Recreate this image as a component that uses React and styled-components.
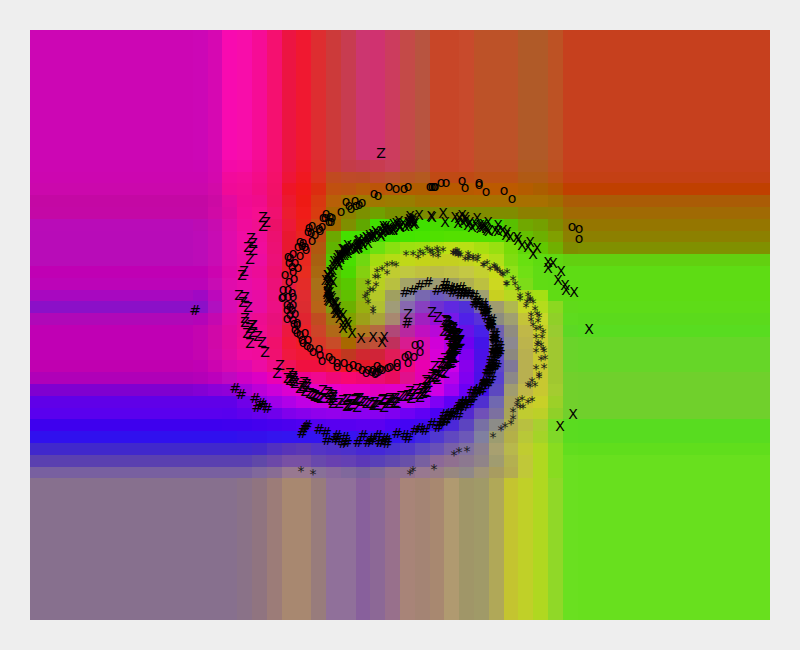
import styled, { createGlobalStyle } from "styled-components";

const GlobalStyle = createGlobalStyle`
  html, body {
    margin: 0;
    background: #eeeeee;
  }
`;

const Figure = styled.div`
  width: 800px;
  height: 650px;
  padding: 30px;
  box-sizing: border-box;
  background: #eeeeee;
`;

const Plot = styled.svg`
  display: block;
  width: 740px;
  height: 590px;
`;

const Marker = styled.text`
  font-family: "DejaVu Sans", sans-serif;
  font-size: 14px;
  text-anchor: middle;
  fill: ${(props) => (props.$soft ? "#1a1a1a" : "#000000")};
`;

const CELL_W = 14.8;
const CELL_H = 11.8;

// left colour (columns 0-10), then columns 11-36, then the colour of the right side
const BANDS = [
  [0, 11, "cc06b4 cc07b6 d608b2 f80ab0 f80daa f60c96 f51070 ec1442 f01830 de2d30 cc3a3a c83c50 cc3670 d03270 cc3c5e c44a48 b85440 c84628 c84628 c84a2c bd5228 bd5228 bd5228 b05a28 b05a28 bd5224 c6401e c6401e"],
  [11, 1, "cc06b2 cc06b4 d408b0 f40aa8 f60ca4 f40c90 f5106e ec1440 f01828 de2c28 c83c38 c43c48 c43c50 c83c50 c8405a c04a40 b85238 c84424 c84424 c84828 bd5024 bd5024 bd5024 b05a20 b05a20 bd5020 c6401a c6401a"],
  [12, 1, "cc06b0 cc06b0 d408ae f20a9c f40c98 f40c88 f4106a ee1438 f01820 dc3020 c04a20 be4a28 bc4a28 c04a30 bc5030 b85424 b45a20 c04a14 c04a14 c04a14 bc5014 bc5014 bc5014 b05a14 b05a14 bc5014 c44014 c44014"],
  [13, 1, "cb08ac cb08ac d20aa8 f00a98 f20c94 f20c84 f21068 ee1428 f01818 dc2c10 c05010 bc5210 b85a08 bc5408 b85a08 b45c00 b05e00 b85a00 b85a00 b85a00 bc5a00 bc5a00 bc5a00 b45c00 ac5e00 b45400 c04000 c04000"],
  [14, 1, "c408a4 c408a4 cc0aa4 e40aa0 f00a94 f00c8c f01068 ec1830 ee1a14 d83810 b86008 a87000 a07800 a07800 9c7c00 987e00 a07400 a87000 a87000 a87000 a87000 a87000 a87000 a87000 a87000 a06e00 aa5c06 aa5c06"],
  [15, 1, "c408a6 c408a6 d00aa6 e00aa0 f20a98 f50e90 f01070 ec1c30 f01c18 d83c10 a86800 8c8000 7c9000 70a000 789000 7c8c00 7c8c00 808c00 808c00 808c00 808c00 808c00 808c00 8c8000 8c8000 907e00 a06a04 a06a04"],
  [16, 1, "b90cb8 bc0cb4 c80cb0 e00ca8 f00c9c f01090 ec1068 ec1838 ec2018 c84c10 a06800 7f8f00 60a800 40e000 40e000 40e000 40e000 48dc00 44d800 40d800 40d800 44d400 58c000 70a800 74a000 808c00 907800 957600"],
  [17, 1, "b80cb8 bc0cb8 c80cb4 e00cac f00ca4 f00c98 ec1070 e81830 e82420 bc4c10 6ca800 44e000 44e000 40e400 40e400 44e400 48e400 50e000 54e000 54e000 54e000 54e000 60d000 64c000 6cb000 80a000 8c8000 8c8000"],
  [18, 1, "b80cb8 bc0cb8 c80cb4 e00cac f00ca4 f00c9c ec1074 e81830 e82820 b05810 60b400 44e000 48e000 6ce010 88e010 9ce010 a0e010 b0e010 bce014 b8e014 a8e010 98e010 78dc08 60d808 60c800 70b000 808c00 809000"],
  [19, 1, "b80cb8 bc0cb8 c80cb4 e00cac ec0ca4 ec0ca0 ec1078 e81c30 e82820 a86010 50c800 48e000 70d810 a4dc10 b4dc14 c0d818 c4d418 c4d020 c4d020 c4d420 c4dc18 b0e018 80dc10 68e010 5edc10 60d810 62d010 62d010"],
  [20, 1, "c000b4 c000b4 cc04b0 e008a8 e80ca0 ec0c98 ec1070 e81c30 e82c20 a86810 58c000 4cd800 84d010 b4d818 c0cc30 c0c840 c0c040 bcbc48 c0c048 c4c844 c4d030 c8dc18 90e018 70e014 60dc14 5edc14 5edc14 5edc14"],
  [21, 1, "bc04b8 bc04b8 c80cb4 e00cac e80ca8 ec0ca0 ec1078 e81c40 e42c28 a87018 60b800 58c800 8cc010 b8d020 b8c040 a4a468 a09c70 9c9c74 a0a060 b0b050 bcc040 ccd820 a4e018 7cdc18 60dc14 5edc14 5edc14 5edc14"],
  [22, 1, "a808c0 a008c4 bc08bc d80cb4 e40cac e80ca4 ec1080 e81c50 e02c30 b06818 70a810 60c000 90b810 b4c828 a0a060 8888a0 7868b0 6c58c0 7060b0 8080a0 a0a070 c8d020 b8d820 a8d818 a4e014 60dc14 5edc14 5edc14"],
  [23, 1, "8b10c8 8c10c8 b010c0 d80cb4 e80ca8 e80ca4 ec1084 e81c50 dc2c30 b86418 809810 6cb000 98b010 b0c030 a09c78 8868b0 8840c0 7030d0 6028e0 5030d8 7060b0 a09c70 b0b850 c8d824 b4dc1c 8cd820 60da1a 5edc18"],
  [24, 1, "b008b8 b404b8 c408b0 e00aa8 e80c9c ec0c90 e8107c e81850 e02430 c04c20 a07810 80a000 9ca018 a8a438 a88870 9848a8 a020c0 9810d8 7818e8 5020e8 5830d8 8c8c80 a0a070 c4c438 c8d828 90d028 5edb1e 5bda1c"],
  [25, 1, "c000b4 c404b0 d008a8 e00aa0 ec0c98 f00c90 ec1078 ec1840 ec2028 cc4428 b06818 909000 b07820 b46a40 b04878 b828a0 c010c0 b808d8 9808e8 6810e8 4820e8 7060b0 908c80 c0b848 c8d028 98cc30 5cd824 58dc20"],
  [26, 1, "c000b4 c404b0 d008a8 e00aa0 f00c98 f00c94 f0106c f01838 f01c28 d83828 c84c28 a86800 b85030 c05038 c0305c d81c90 d80cb0 d000d8 b000e8 7000f0 4414e8 6858b8 8c8890 bcb44c c8cc30 a0c830 6ad42a 66d628"],
  [27, 1, "c000b4 c404b0 d008ac e00aa4 f00ca0 f00c9c f01070 f01840 f01834 f01830 e02c20 c03820 d02830 d02438 e01c58 e81080 e008a8 d800d8 b800e8 8000f0 4c10e8 6048c8 8c8880 b8b050 c8c830 a0c830 6ad42a 66d628"],
  [28, 1, "c000b0 c000b4 cc04b0 d808b0 e008b0 ec0ca4 f00c88 f01058 f01040 f01040 f01838 f01828 e01828 e81830 f01050 f00880 e800b0 e000d8 cc00e8 8800ec 5010e8 6048c8 807898 b8b050 c8c830 a0c830 6ad42a 66d628"],
  [29, 1, "b000b8 b400b8 bc00bc c008c0 d000c4 dc00c4 ec00b4 f000a0 f00090 f00890 f00878 f80870 f00870 ec0c70 e80c60 e0108c e400b4 d800d8 b800e8 8000f0 4c10e8 5840d0 8c8888 b8b050 c8c830 a0c830 72d02c 70d02c"],
  [30, 1, "8000d0 8400d4 8c00d8 9000d8 a800d8 bc00d8 cc00d8 dc00d0 e800c8 e800c8 e800c8 e800c0 e800c0 e000c0 e000c8 e000cc e000d8 d000e4 a000f0 6c00f4 4410e8 5c48c0 a09c70 c0b848 c8c830 a4cc30 72d02c 70d02c"],
  [31, 1, "6000e8 6000e8 6000e8 6000e8 7000e8 9000e8 a000e8 b000e8 c000e4 c800e0 c800e0 c800e0 c400e4 c000e4 c000e4 b800ec a800f0 8000f4 6000f4 4808f0 5030d0 7068b0 a8a060 c8c830 c8d028 9cd028 72d02c 70d02c"],
  [32, 1, "5a00ee 5a00ee 5a00ee 5800ee 6000ec 6800ec 7000ec 8000ec 8800ec 9000ec 9400ec 9000ec 8c00f0 8800f0 8000f0 7000f4 6000f4 4c00f4 4414e8 5428d0 7050b8 7c70a0 a8a458 c0cc30 bcd028 90d028 72d02c 70d02c"],
  [33, 1, "3e00ee 3e00ee 3e00ee 4000ee 4000ee 4400ee 4800ee 4c00ee 5000f0 5400f0 5800f0 5800f0 5c00f0 5c00f0 5000f4 4404f4 4008f0 3c10ec 4c28d8 5c44c0 7870a4 8c8c88 b0ac50 b8c040 a8d030 78dc24 5adc20 58dc20"],
  [34, 1, "3010ee 3010ee 3010ee 3010ee 3410ec 3410ec 3414ee 3414f0 3414f0 3414f0 3414f0 3814f0 3c10ee 3c10ee 3414f0 3818f0 4028e0 5038d0 6048c0 6c58b8 8080a0 9c9c70 b4b048 b8c838 a4d428 80d828 5adc20 58dc20"],
  [35, 1, "4028cc 4028cc 4028cc 4028cc 4028cc 4428c8 5030c0 5834b8 5c38b4 5434c4 5030c8 4c30cc 4828d4 4428d8 4830d0 5038c8 5c48c0 6850b8 7860a8 8070a0 8c8090 a8a070 b8b84c c0cc30 b0d820 88dc20 62de1e 60de1c"],
  [36, 1, "5a40b0 5a40b0 5a40b0 5a40b0 5a40b0 6048a8 6c48a8 7850a4 7850a4 6848ac 6840b0 6440b4 5c38b8 5840b8 6048b0 6850a8 7860a0 8c6898 907090 8c7890 908488 a09c70 b4b050 c0c838 b0d820 88dc20 6ae020 68e01e"],
  [37, 1, "7860a0 7860a0 7860a0 7860a0 7860a0 80689c 886c94 987890 987890 887098 88689c 80689c 78609c 806898 907090 907090 987890 987c88 988880 908888 a09478 a89c60 b4ac50 c0c838 b0d820 88dc20 6ae020 68e01e"],
  [38, 12, "87708e 87708e 87708e 87708e 8a7288 907480 9c7c78 a88870 a88870 987c7c 90709a 90709a 88609c 8c6896 98708c a88478 a48474 a88870 b09a70 a09668 a09a68 b0a858 c4c430 c0d028 b0d820 90d828 6ae020 68e01e"],
];

// baseline offset so that x,y is the middle of each glyph
const BASELINE = { o: 3.8, X: 5, Z: 5, "*": 8, "#": 5 };

// points read off the plot in page pixels
const POINTS = {
  o: [
    [432,187],[435,187],[441,183],[446,183],[462,181],[465,188],[479,183],[479,185],[486,192],[504,191],[512,199],[572,227],[579,229],[579,239],
    [389,187],[396,189],[404,189],[408,187],[430,187],[434,187],[374,194],[378,196],[362,203],[359,205],[356,206],[355,201],[346,202],[349,206],[351,209],[341,212],
    [326,214],[323,218],[325,218],[330,217],[332,218],[329,222],[331,222],[322,227],[319,229],[320,231],[312,226],[309,228],[308,232],[311,233],[315,235],[312,241],
    [300,242],[303,243],[298,247],[305,247],[302,246],[306,250],[293,254],[288,257],[300,256],[290,258],[289,263],[295,263],[292,267],[298,268],[293,272],[285,275],[294,279],[289,282],
    [283,290],[288,290],[292,293],[283,297],[288,297],[282,298],[293,297],[287,305],[290,307],[293,305],[287,310],[292,310],[295,314],[290,315],[287,319],[293,320],[297,325],
    [294,324],[297,323],[295,330],[297,333],[300,335],[302,340],[305,333],[303,343],[308,340],[307,346],[310,348],[313,352],[319,349],[320,355],[322,361],[329,357],[332,360],[337,363],[337,367],[344,363],[349,368],[353,365],[358,367],[362,370],[366,373],[368,370],[373,370],[375,374],[380,369],
    [415,345],[420,344],[420,352],[405,357],[408,355],[414,357],[408,363],[397,363],[397,367],[390,367],[388,368],[382,370],[377,366],[378,372],[372,372],[376,373],
  ],
  X: [
    [432,217],[443,213],[445,222],[455,217],[462,215],[458,223],[465,217],[463,222],[468,225],[472,227],[477,218],[480,225],[483,227],[488,222],[487,230],[495,230],[498,225],[507,232],[510,237],[506,235],[517,237],[518,240],[522,245],[530,242],[528,247],[537,248],[533,254],[548,262],[553,263],[548,268],[561,271],[558,280],[565,285],[566,290],[574,292],
    [589,329],[573,414],[560,426],
    [431,216],[419,215],[413,218],[410,216],[415,223],[408,222],[403,223],[400,227],[396,223],[391,230],[385,228],[382,232],[377,233],[372,237],[367,238],[362,242],[357,245],[352,247],[348,250],[345,253],[340,255],[337,258],
    [347,250],[342,255],[333,265],[330,272],[328,280],[333,282],[327,292],[330,297],[333,302],[328,300],[337,307],[340,313],[343,315],[347,322],
    [343,323],[348,325],[343,328],[352,333],[361,338],[373,337],[382,342],[384,337],
  ],
  "*": [
    [373,307],[373,310],[368,300],[365,295],[367,292],[370,288],[373,288],[368,281],[376,283],[375,275],[378,275],[377,269],[382,267],[387,271],[387,263],[392,262],[396,263],
    [406,252],[413,252],[418,255],[420,250],[423,252],[427,247],[430,250],[433,253],[437,247],[438,254],[443,248],[453,251],[457,249],[458,253],[468,252],[468,257],[473,255],[477,258],[478,255],[484,263],[487,261],[494,264],[497,267],[500,270],[503,273],[507,282],
    [432,249],[438,250],[455,252],[459,251],[465,257],[469,255],[473,257],[483,263],[495,265],[490,267],[497,268],[502,272],[507,270],[506,282],[513,277],[515,282],[518,287],[520,294],[528,293],[530,298],
    [520,297],[530,297],[527,300],[533,300],[526,304],[535,307],[537,312],[531,313],[539,314],[531,318],[538,319],[533,323],[536,327],[540,326],[543,330],[536,335],[542,335],[538,341],[537,343],[541,343],[543,347],[536,349],[544,349],[541,357],[545,356],[536,366],[544,365],[539,373],[539,375],[532,379],[528,383],[535,383],[530,384],
    [522,397],[518,399],[517,403],[520,405],[523,405],[528,400],[532,398],[513,409],[513,416],[511,421],[505,424],[501,427],[493,434],
    [467,448],[459,449],[454,452],[434,466],[413,468],[410,471],[301,468],[313,471],
  ],
  "#": [
    [195,310],[235,388],[241,394],[255,398],[257,407],[261,403],[263,405],[267,408],
    [307,425],[305,427],[303,430],[302,433],[319,429],[326,432],[327,440],[337,435],[335,438],[338,440],[345,437],[347,442],[343,443],[358,442],[363,435],[368,442],[372,438],[378,435],[380,442],[385,438],[387,443],
    [372,440],[380,442],[387,440],[397,433],[405,435],[408,438],[415,430],[420,428],[425,430],[432,423],[438,427],[443,420],
    [405,292],[413,290],[420,285],[428,282],[437,290],[445,283],[407,323],
  ],
  Z: [
    [381,153],[408,314],[432,312],[438,317],
    [263,217],[266,222],[263,226],[251,238],[253,243],[248,247],[253,250],[250,259],[244,271],[242,275],[239,295],[245,297],[243,302],[248,307],[245,318],[253,325],[250,328],
    [245,322],[252,325],[247,333],[253,332],[258,336],[250,343],[262,342],[265,352],
    [280,365],[277,373],[290,373],[290,380],[295,383],[300,388],[307,387],[310,393],[315,395],[322,398],[333,395],[333,403],[343,400],[347,406],[355,400],[357,407],[370,403],[377,405],[383,400],[387,403],
    [375,405],[390,398],[395,402],[408,395],[420,397],[427,387],[435,377],[442,372],[450,363],[455,357],[453,348],[458,343],
    [447,325],[453,327],[455,335],[457,343],[452,355],
  ],
};

// the black parts of the spirals are too packed to read one by one
const DENSE = [
  ["X", [[335,262],[345,250],[360,243],[380,232],[395,226],[415,220]], 60, 4],
  ["X", [[330,268],[327,285],[330,300],[340,315]], 24, 3],
  ["X", [[460,218],[480,226],[500,232]], 10, 3],
  ["*", [[455,250],[459,253]], 6, 2],
  ["#", [[445,286],[465,292],[482,305],[494,325],[497,345],[495,360],[488,380],[475,395],[458,410],[440,423]], 90, 4],
  ["Z", [[290,380],[330,398],[380,405],[420,392],[445,365],[457,340],[447,325]], 90, 5],
  ["Z", [[445,322],[457,340],[450,362]], 20, 4],
];

const noise = (seed) => {
  const v = Math.sin(seed * 127.1) * 43758.5453;
  return v - Math.floor(v) - 0.5;
};

const alongLine = (line, t) => {
  const pos = t * (line.length - 1);
  const i = Math.min(Math.floor(pos), line.length - 2);
  const f = pos - i;
  return [line[i][0] + (line[i + 1][0] - line[i][0]) * f, line[i][1] + (line[i + 1][1] - line[i][1]) * f];
};

const buildMarkers = () => {
  const out = [];
  Object.keys(POINTS).forEach((glyph) => {
    POINTS[glyph].forEach(([x, y]) => out.push({ glyph, x, y }));
  });
  DENSE.forEach(([glyph, line, count, spread], d) => {
    for (let i = 0; i < count; i++) {
      const [x, y] = alongLine(line, i / (count - 1));
      out.push({
        glyph,
        x: x + noise(d * 100 + i + 0.3) * spread * 2,
        y: y + noise(d * 100 + i + 0.7) * spread * 2,
      });
    }
  });
  return out;
};

const MARKERS = buildMarkers();

const Field = () => (
  <g shapeRendering="crispEdges">
    {BANDS.map(([row, span, colours]) => {
      const cells = colours.split(" ");
      const y = row * CELL_H;
      const h = span * CELL_H;
      return (
        <g key={row}>
          <rect x={0} y={y} width={11 * CELL_W} height={h} fill={`#${cells[0]}`} />
          {cells.slice(1, -1).map((c, i) => (
            <rect key={i} x={(11 + i) * CELL_W} y={y} width={CELL_W} height={h} fill={`#${c}`} />
          ))}
          <rect x={37 * CELL_W} y={y} width={13 * CELL_W} height={h} fill={`#${cells[cells.length - 1]}`} />
        </g>
      );
    })}
  </g>
);

export default function App() {
  return (
    <Figure>
      <GlobalStyle />
      <Plot viewBox="0 0 740 590">
        <Field />
        {MARKERS.map((m, i) => (
          <Marker key={i} x={m.x - 30} y={m.y - 30 + BASELINE[m.glyph]} $soft={m.glyph === "*"}>
            {m.glyph}
          </Marker>
        ))}
      </Plot>
    </Figure>
  );
}
